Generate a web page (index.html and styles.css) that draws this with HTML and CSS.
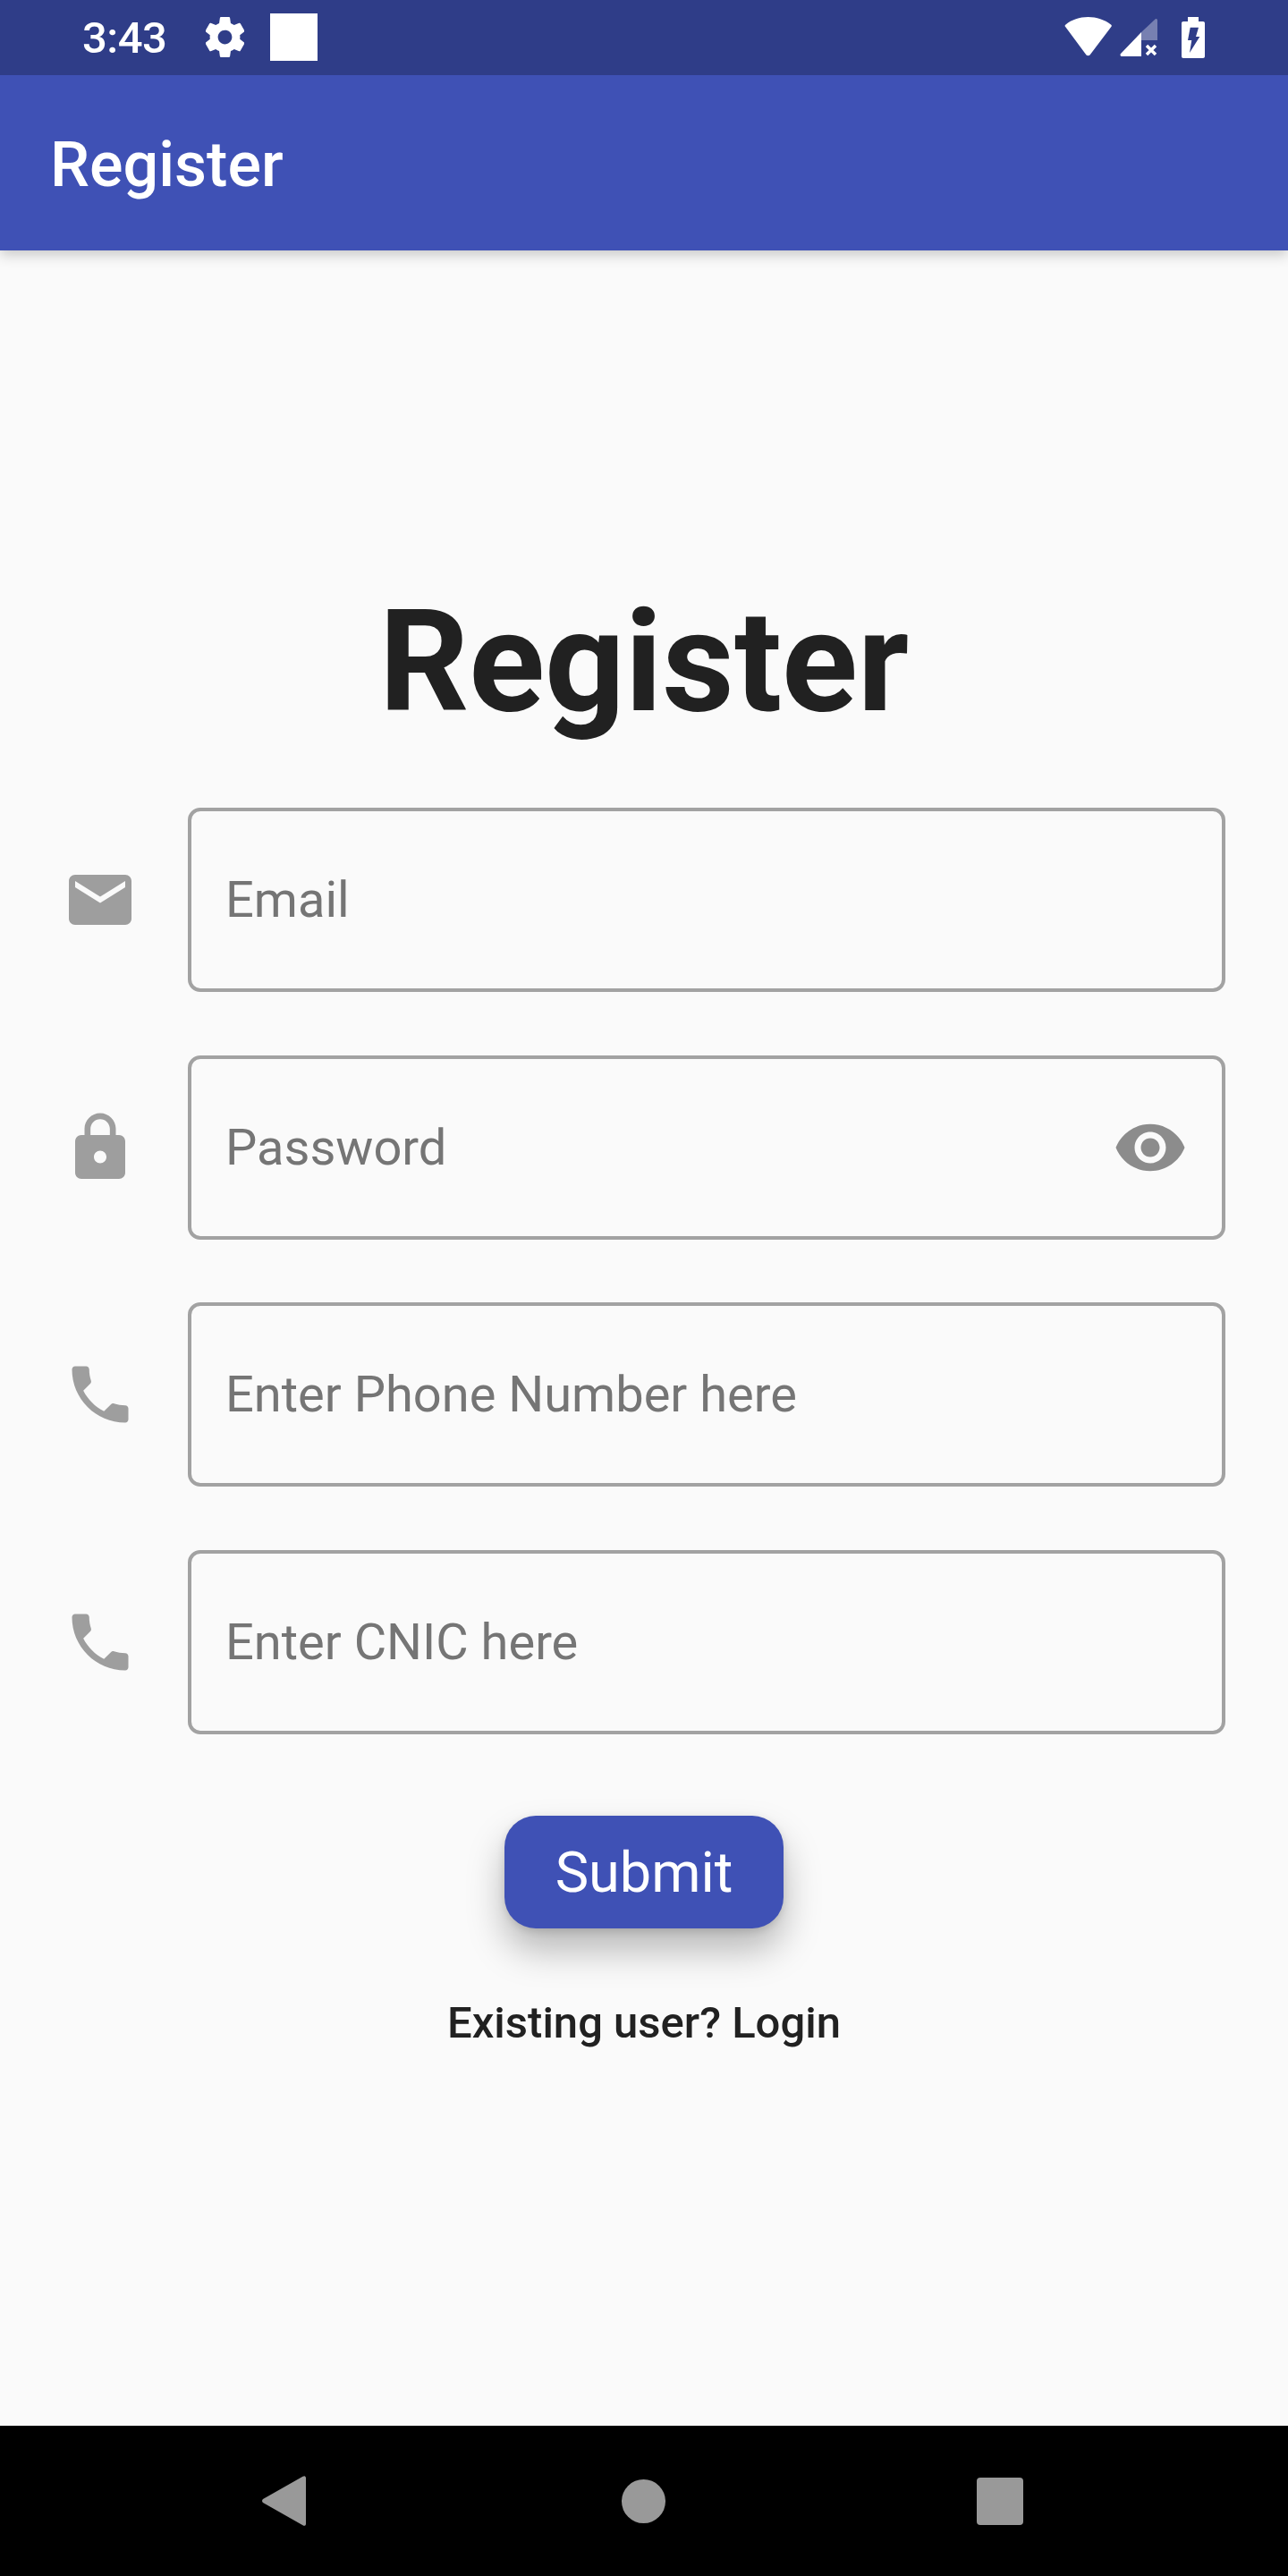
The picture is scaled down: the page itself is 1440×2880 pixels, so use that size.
FILE: index.html
```html
<!DOCTYPE html>
<html lang="en">
<head>
<meta charset="utf-8">
<title>Register</title>
<link rel="stylesheet" href="styles.css">
</head>
<body>
<div class="screen">
  <div class="status">
    <span class="time">3:43</span>
    <svg class="gear" viewBox="2.5 2 19 20"><path d="M19.43 12.98c.04-.32.07-.64.07-.98s-.03-.66-.07-.98l2.11-1.65c.19-.15.24-.42.12-.64l-2-3.46c-.12-.22-.39-.3-.61-.22l-2.49 1c-.52-.4-1.08-.73-1.69-.98l-.38-2.65C14.46 2.18 14.25 2 14 2h-4c-.25 0-.46.18-.49.42l-.38 2.65c-.61.25-1.17.59-1.69.98l-2.49-1c-.23-.09-.49 0-.61.22l-2 3.46c-.13.22-.07.49.12.64l2.11 1.65c-.04.32-.07.65-.07.98s.03.66.07.98l-2.11 1.65c-.19.15-.24.42-.12.64l2 3.46c.12.22.39.3.61.22l2.49-1c.52.4 1.08.73 1.69.98l.38 2.65c.03.24.24.42.49.42h4c.25 0 .46-.18.49-.42l.38-2.65c.61-.25 1.17-.59 1.69-.98l2.49 1c.23.09.49 0 .61-.22l2-3.46c.12-.22.07-.49-.12-.64l-2.11-1.65zM12 15.5c-1.93 0-3.5-1.57-3.5-3.5s1.57-3.5 3.5-3.5 3.5 1.57 3.5 3.5-1.57 3.5-3.5 3.5z"/></svg>
    <span class="square"></span>
    <span class="status-spacer"></span>
    <svg class="wifi" viewBox="0 0 54 44"><path d="M1.5 8.5C8 3 17 0 26.5 0S45 3 52 8.5c1 .8 1 1.5.5 2.2L28.5 42.5c-1 1.1-3 1.1-4 0L1 10.7C.3 10 .5 9.3 1.5 8.5z"/></svg>
    <svg class="signal" viewBox="0 0 42 42"><path d="M1 39 24 15V42H2.500C.5 42 0 40 1 39z"/><path class="signal-dim" d="M24 15 39.500.5C41 -.5 42 .5 42 2V24H24z"/><path class="signal-x" d="M30 30l10 10M40 30 30 40"/></svg>
    <svg class="battery" viewBox="0 0 26 46"><path d="M7 0h12v5h5c1.200 0 2 .8 2 2v37c0 1.200-.8 2-2 2H2c-1.200 0-2-.8-2-2V7c0-1.200.8-2 2-2h5z"/><path class="bolt" d="M9.700 11.700H19L16 22h4.300L9 40l2.300-14H7z"/></svg>
  </div>
  <header class="appbar">Register</header>
  <main class="content">
    <h1 class="heading">Register</h1>
    <div class="form">
      <div class="row">
        <svg class="icon" viewBox="0 0 24 24"><path d="M20 4H4c-1.100 0-1.990.9-1.990 2L2 18c0 1.100.9 2 2 2h16c1.100 0 2-.9 2-2V6c0-1.100-.9-2-2-2zm0 4l-8 5-8-5V6l8 5 8-5v2z"/></svg>
        <div class="field">Email</div>
      </div>
      <div class="row">
        <svg class="icon" viewBox="0 0 24 24"><path d="M18 8h-1V6c0-2.760-2.240-5-5-5S7 3.240 7 6v2H6c-1.100 0-2 .9-2 2v10c0 1.100.9 2 2 2h12c1.100 0 2-.9 2-2V10c0-1.100-.9-2-2-2zm-6 9c-1.100 0-2-.9-2-2s.9-2 2-2 2 .9 2 2-.9 2-2 2zm3.100-9H8.900V6c0-1.710 1.390-3.100 3.100-3.100 1.710 0 3.100 1.390 3.100 3.100v2z"/></svg>
        <div class="field">
          <span>Password</span>
          <svg class="eye" viewBox="0 0 24 24"><path d="M12 4.500C7 4.500 2.730 7.610 1 12c1.730 4.390 6 7.500 11 7.500s9.270-3.110 11-7.500c-1.730-4.390-6-7.500-11-7.500zM12 17c-2.760 0-5-2.240-5-5s2.240-5 5-5 5 2.240 5 5-2.240 5-5 5zm0-8c-1.660 0-3 1.340-3 3s1.340 3 3 3 3-1.340 3-3-1.340-3-3-3z"/></svg>
        </div>
      </div>
      <div class="row">
        <svg class="icon" viewBox="0 0 24 24"><path d="M6.620 10.790c1.440 2.830 3.760 5.140 6.590 6.590l2.200-2.200c.27-.27.67-.36 1.020-.24 1.120.37 2.330.57 3.570.57.55 0 1 .45 1 1V20c0 .55-.45 1-1 1-9.390 0-17-7.610-17-17 0-.55.45-1 1-1h3.500c.55 0 1 .45 1 1 0 1.250.2 2.450.57 3.570.11.35.03.74-.25 1.020l-2.200 2.200z"/></svg>
        <div class="field">Enter Phone Number here</div>
      </div>
      <div class="row">
        <svg class="icon" viewBox="0 0 24 24"><path d="M6.620 10.790c1.440 2.830 3.760 5.140 6.590 6.590l2.200-2.200c.27-.27.67-.36 1.020-.24 1.120.37 2.330.57 3.570.57.55 0 1 .45 1 1V20c0 .55-.45 1-1 1-9.390 0-17-7.610-17-17 0-.55.45-1 1-1h3.500c.55 0 1 .45 1 1 0 1.250.2 2.450.57 3.570.11.35.03.74-.25 1.020l-2.200 2.200z"/></svg>
        <div class="field">Enter CNIC here</div>
      </div>
    </div>
    <button class="submit" type="button">Submit</button>
    <a class="login">Existing user? Login</a>
  </main>
  <nav class="navbar">
    <svg class="nav-back" viewBox="0 0 49 56"><path d="M1 30C-.3 28.700-.3 27.300 1 26L45.500 .8C47.500-.6 49 .3 49 2.500V53.500C49 55.700 47.500 56.600 45.500 55.200z"/></svg>
    <span class="nav-home"></span>
    <span class="nav-recent"></span>
  </nav>
</div>
</body>
</html>
```
FILE: styles.css
```css
* { box-sizing: border-box; }
html, body { margin: 0; padding: 0; }
body { font-family: Roboto, "Liberation Sans", sans-serif; background: #fafafa; }
.screen { width: 1440px; height: 2880px; display: flex; flex-direction: column; overflow: hidden; background: #fafafa; }

.status { height: 84px; flex: none; background: #2f3d88; display: flex; align-items: center; padding-left: 92px; color: #fff; position: relative; z-index: 2; }
.time { font-size: 49px; font-weight: 500; line-height: 84px; width: 94px; letter-spacing: -.5px; margin-top: 1px; }
.gear { width: 43px; height: 45px; fill: #fff; margin-left: 44px; margin-top: -1px; }
.square { width: 53px; height: 53px; background: #fff; margin-left: 29px; margin-top: -1px; }
.status-spacer { flex: 1; }
.wifi { width: 54px; height: 44px; fill: #fff; margin-top: -3px; }
.signal { width: 42px; height: 42px; fill: #fff; margin-left: 8px; overflow: visible; }
.signal-dim { opacity: .35; }
.signal-x { fill: none; stroke: #fff; stroke-width: 3.5; }
.battery { width: 26px; height: 46px; fill: #fff; margin-left: 27px; margin-right: 93px; }
.bolt { fill: #2f3d88; }

.appbar { height: 196px; flex: none; background: #3f51b5; color: #fff; font-size: 70px; font-weight: 500; line-height: 200px; padding-left: 56px; box-shadow: 0 5px 14px rgba(0,0,0,.2); position: relative; z-index: 1; }

.content { flex: 1; display: flex; flex-direction: column; align-items: center; padding-top: 372px; }
.heading { margin: 0; font-size: 157px; font-weight: 700; line-height: 176px; color: #212121; }
.form { width: 100%; margin-top: 75px; padding: 0 70px; display: flex; flex-direction: column; gap: 70.67px; }
.row { display: flex; align-items: center; gap: 56px; }
.icon { width: 84px; height: 84px; flex: none; fill: #9e9e9e; }
.field { flex: 1; height: 206px; border: 4px solid #a2a2a2; border-radius: 14px; display: flex; align-items: center; justify-content: space-between; padding: 0 38px 0 38px; font-size: 56px; color: #757575; }
.eye { width: 84px; height: 84px; fill: #8c8c8c; }

.submit { width: 312px; height: 126px; margin-top: 91px; border: 0; border-radius: 35px; background: #3f51b5; color: #fff; font: 400 63px Roboto, sans-serif; padding: 2px 0 0; box-shadow: 0 24px 42px rgba(0,0,0,.27), 0 3px 10px rgba(0,0,0,.12); }
.login { margin-top: 76px; font-size: 49px; font-weight: 500; line-height: 60px; color: #212121; }

.navbar { height: 168px; flex: none; background: #000; display: flex; align-items: center; padding-left: 293px; }
.nav-back { width: 49px; height: 56px; fill: #999; }
.nav-home { width: 49px; height: 49px; border-radius: 50%; background: #999; margin-left: 353px; }
.nav-recent { width: 52px; height: 53px; border-radius: 4px; background: #999; margin-left: 348px; }
```
